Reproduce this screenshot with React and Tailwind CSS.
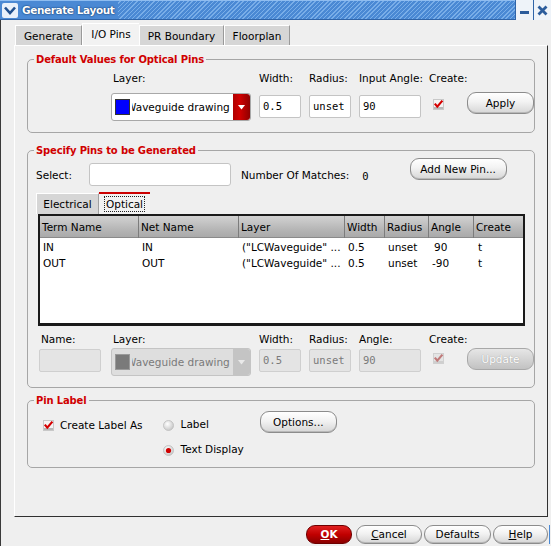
import React from "react";

function Check({ disabled }) {
  return (
    <svg width="11" height="11" viewBox="0 0 11 11" className="block">
      <rect x="0.5" y="0.5" width="10" height="10" fill={disabled ? "#e4e4e4" : "#f4f4f4"} stroke={disabled ? "#d0d0d0" : "#c8c8c8"} />
      <rect x="1" y="8" width="9" height="2" fill={disabled ? "#cfcfcf" : "#b8b8b8"} />
      <path d="M1.8 4.6 L4.3 7.6 L9.4 1.6" fill="none" stroke={disabled ? "#c07a7a" : "#d40000"} strokeWidth="2.2" />
    </svg>
  );
}

function Radio({ on }) {
  return (
    <svg width="11" height="11" viewBox="0 0 11 11" className="block">
      <defs>
        <radialGradient id={on ? "rg1" : "rg0"} cx="0.4" cy="0.35" r="0.7">
          <stop offset="0" stopColor="#ffffff" />
          <stop offset="1" stopColor="#c4c4c4" />
        </radialGradient>
      </defs>
      <circle cx="5.5" cy="5.5" r="5" fill={`url(#${on ? "rg1" : "rg0"})`} stroke="#bdbdbd" strokeWidth="0.8" />
      {on && <circle cx="5.5" cy="5.5" r="2.6" fill="#d00000" />}
    </svg>
  );
}

function Btn({ children, className }) {
  return (
    <div className={"flex items-center justify-center rounded-[9px] border border-[#8c8c8c] bg-[linear-gradient(#ffffff,#f2f2f2_45%,#d6d6d6)] text-black shadow-[inset_0_-1px_0_#b8b8b8] " + className}>
      {children}
    </div>
  );
}

function DisBtn({ children, className }) {
  return (
    <div className={"flex items-center justify-center rounded-[9px] border border-[#a8a8a8] bg-[linear-gradient(#e6e6e6,#d6d6d6_45%,#c2c2c2)] text-white [text-shadow:0_0_1px_#8a8a8a] " + className}>
      {children}
    </div>
  );
}

function Combo({ disabled }) {
  return (
    <div className={"flex h-[28px] w-[140px] items-stretch rounded-[3px] border " + (disabled ? "border-[#c4c4c4] bg-[#dedede]" : "border-[#a8a8a8] bg-white")}>
      <div className="flex items-center pl-[3px]">
        <div className={"h-[16px] w-[15px] border " + (disabled ? "border-[#9a9a9a] bg-[#7a7a7a]" : "border-[#333] bg-[#0000ff]")}></div>
      </div>
      <div className="ml-[2px] flex flex-1 items-center overflow-hidden">
        <span className={"-ml-[6px] whitespace-nowrap " + (disabled ? "text-[#7a7a7a]" : "text-black")}>Waveguide drawing</span>
      </div>
      <div className={"flex w-[17px] items-center justify-center rounded-r-[3px] " + (disabled ? "bg-[#c4c4c4]" : "bg-[linear-gradient(90deg,#b00000,#d00000_40%,#8e0000)]")}>
        <svg width="7" height="5" viewBox="0 0 7 5"><path d="M0 0 L7 0 L3.5 4.5 Z" fill={disabled ? "#eaeaea" : "#ffffff"} /></svg>
      </div>
    </div>
  );
}

function Entry({ w, value, disabled, mono = true }) {
  return (
    <div className={"flex h-[23px] items-center rounded-[2px] border pl-[3px] " + w + " " + (disabled ? "border-[#cfcfcf] bg-[#e4e4e4] text-[#7a7a7a]" : "border-[#c4c4c4] bg-white text-black") + (mono ? " font-['DejaVu_Sans_Mono',monospace]" : "")}>
      {value}
    </div>
  );
}

const cols = [
  ["Term Name", "w-[98px]"],
  ["Net Name", "w-[100px]"],
  ["Layer", "w-[106px]"],
  ["Width", "w-[40px]"],
  ["Radius", "w-[44px]"],
  ["Angle", "w-[45px]"],
  ["Create", "w-[50px]"],
];

const rows = [
  ["IN", "IN", '("LCWaveguide" ...', "0.5", "unset", "90", "t"],
  ["OUT", "OUT", '("LCWaveguide" ...', "0.5", "unset", "-90", "t"],
];

const dataPad = ["pl-[3px]", "pl-[4px]", "pl-[4px]", "pl-[4px]", "pl-[4px]", "pl-[6px]", "pl-[5px]"];
const dataPad2 = ["pl-[3px]", "pl-[4px]", "pl-[4px]", "pl-[4px]", "pl-[4px]", "pl-[4px]", "pl-[5px]"];

const legendCls = "ml-[6px] px-[2px] text-[10px] font-bold leading-[13px] tracking-[-0.15px] text-[#d00000]";

export default function App() {
  return (
    <div className="relative h-[546px] w-[551px] overflow-hidden bg-[#efefef] font-['DejaVu_Sans',sans-serif] text-[10.5px] leading-[13px] text-black">
      {/* Title bar */}
      <div className="flex h-[20px] items-stretch bg-[#4a89d4] shadow-[inset_0_1px_0_#8fbdf0,inset_0_-1px_0_#2f64a8]">
        <div className="flex w-[20px] items-center justify-center">
          <div className="flex h-[15px] w-[16px] items-center justify-center rounded-[2px] bg-[#e8f0fa]">
            <svg width="12" height="9" viewBox="0 0 12 9"><path d="M1 1.5 L6 7 L11 1.5" fill="none" stroke="#1f4f8e" strokeWidth="2.6" /></svg>
          </div>
        </div>
        <div className="flex items-center pl-[2px] pr-[4px] text-[10.5px] font-bold tracking-[-0.4px] text-white [text-shadow:0_0_2px_#12386b,0_0_1px_#12386b]">Generate Layout</div>
        <div className="flex-1 [background-image:repeating-linear-gradient(135deg,#4a89d4_0px,#4a89d4_2px,#79aee8_2px,#79aee8_3px)] shadow-[inset_0_1px_0_#8fbdf0,inset_0_-1px_0_#2f64a8]"></div>
        <div className="flex w-[18px] items-center justify-center border-l border-[#2f64a8] bg-[#eef3f9]">
          <div className="mt-[5px] h-[3px] w-[9px] bg-[#2b5c9c]"></div>
        </div>
        <div className="flex w-[18px] items-center justify-center border-l border-[#2f64a8] bg-[#eef3f9]">
          <svg width="11" height="11" viewBox="0 0 11 11"><path d="M1.5 1.5 L9.5 9.5 M9.5 1.5 L1.5 9.5" stroke="#2b5c9c" strokeWidth="2.8" /></svg>
        </div>
      </div>

      {/* Window body */}
      <div className="h-[526px] border-l border-[#3a3a3a]">
        {/* Main tabs */}
        <div className="ml-[14px] flex h-[25px] items-end pt-[3px]">
          <div className="flex h-[20px] w-[67px] items-center justify-center border border-b-0 border-l-[#ffffff] border-r-[#9a9a9a] border-t-[#ffffff] bg-[#d6d6d6] pt-[1px]">Generate</div>
          <div className="flex h-[22px] w-[57px] items-center justify-center border-l border-t border-[#ffffff] bg-[#f2f2f2]">I/O Pins</div>
          <div className="flex h-[20px] w-[85px] items-center justify-center border border-b-0 border-l-[#ffffff] border-r-[#9a9a9a] border-t-[#ffffff] bg-[#d6d6d6] pt-[1px]">PR Boundary</div>
          <div className="flex h-[20px] w-[66px] items-center justify-center border border-b-0 border-l-[#ffffff] border-r-[#9a9a9a] border-t-[#ffffff] bg-[#d6d6d6] pt-[1px]">Floorplan</div>
        </div>

        {/* Tab pane */}
        <div className="ml-[13px] h-[472px] w-[534px] border border-b-[#303030] border-l-[#ffffff] border-r-[#303030] border-t-[#ffffff] bg-[#efefef] pl-[12px] pt-[7px]">
          {/* Group 1 */}
          <fieldset className="h-[80px] w-[508px] rounded-[5px] border border-[#a6a6a6] p-0">
            <legend className={legendCls}>Default Values for Optical Pins</legend>
            <div className="flex items-start pt-[6px]">
              <div className="ml-[83px] flex w-[140px] flex-col">
                <div className="ml-[2px] h-[13px]">Layer:</div>
                <div className="mt-[8px]"><Combo /></div>
              </div>
              <div className="ml-[8px] flex w-[42px] flex-col">
                <div className="h-[13px]">Width:</div>
                <div className="mt-[10px]"><Entry w="w-[42px]" value="0.5" /></div>
              </div>
              <div className="ml-[8px] flex w-[42px] flex-col">
                <div className="h-[13px] whitespace-nowrap">Radius:</div>
                <div className="mt-[10px]"><Entry w="w-[42px]" value="unset" /></div>
              </div>
              <div className="ml-[8px] flex w-[62px] flex-col">
                <div className="h-[13px] whitespace-nowrap">Input Angle:</div>
                <div className="mt-[10px]"><Entry w="w-[62px]" value="90" /></div>
              </div>
              <div className="ml-[8px] flex w-[38px] flex-col">
                <div className="h-[13px]">Create:</div>
                <div className="ml-[4px] mt-[14px]"><Check /></div>
              </div>
              <div className="flex flex-col">
                <div className="h-[13px]"></div>
                <Btn className="mt-[7px] h-[22px] w-[67px]">Apply</Btn>
              </div>
            </div>
          </fieldset>

          {/* Group 2 */}
          <fieldset className="mt-[11px] h-[244px] w-[508px] rounded-[5px] border border-[#a6a6a6] p-0">
            <legend className={legendCls}>Specify Pins to be Generated</legend>
            <div className="flex h-[35px] items-start pt-[1px]">
              <div className="ml-[8px] mt-[11px]">Select:</div>
              <div className="ml-[17px] mt-[5px] h-[23px] w-[142px] rounded-[3px] border border-[#c4c4c4] bg-white"></div>
              <div className="ml-[10px] mt-[11px] whitespace-nowrap">Number Of Matches:</div>
              <div className="ml-[13px] mt-[12px] font-['DejaVu_Sans_Mono',monospace]">0</div>
              <Btn className="ml-[41px] h-[22px] w-[97px]">Add New Pin...</Btn>
            </div>
            {/* Sub tabs */}
            <div className="ml-[8px] flex h-[22px] items-end">
              <div className="flex h-[21px] w-[63px] items-center justify-center border border-b-0 border-l-[#ffffff] border-r-[#a0a0a0] border-t-[#ffffff] bg-[#d6d6d6] pt-[1px]">Electrical</div>
              <div className="flex h-[22px] w-[51px] items-center justify-center border-t-2 border-[#cc0000] bg-[#f2f2f2]">
                <span className="border border-dotted border-[#222] px-[1px] leading-[14px]">Optical</span>
              </div>
            </div>
            {/* Table */}
            <div className="ml-[10px] h-[112px] w-[487px] border-b-[3px] border-l-2 border-r-2 border-t-2 border-[#1a1a1a] bg-white">
              <div className="flex h-[22px] bg-[linear-gradient(#d2d2d2,#b6b6b6_60%,#a8a8a8)] shadow-[inset_0_-1px_0_#8a8a8a]">
                {cols.map(([name, w], i) => (
                  <div key={name} className={"flex items-center pl-[2px] " + w + (i > 0 ? " border-l border-[#7c7c7c]" : "")}>{name}</div>
                ))}
              </div>
              <div className="pt-[1px]">
                {rows.map((r, ri) => (
                  <div key={ri} className="flex h-[16.5px] items-center">
                    {r.map((c, i) => (
                      <div key={i} className={"whitespace-nowrap " + cols[i][1] + " " + (c === "-90" ? dataPad2[i] : dataPad[i])}>{c}</div>
                    ))}
                  </div>
                ))}
              </div>
            </div>
            {/* Edit row */}
            <div className="flex items-start pt-[7px]">
              <div className="ml-[11px] flex w-[62px] flex-col">
                <div className="ml-[2px] h-[13px]">Name:</div>
                <div className="mt-[3px] h-[23px] w-[62px] rounded-[2px] border border-[#cfcfcf] bg-[#e4e4e4]"></div>
              </div>
              <div className="ml-[10px] flex w-[140px] flex-col">
                <div className="ml-[2px] h-[13px]">Layer:</div>
                <div className="mt-[2px]"><Combo disabled /></div>
              </div>
              <div className="ml-[8px] flex w-[42px] flex-col">
                <div className="h-[13px]">Width:</div>
                <div className="mt-[3px]"><Entry w="w-[42px]" value="0.5" disabled /></div>
              </div>
              <div className="ml-[8px] flex w-[42px] flex-col">
                <div className="h-[13px] whitespace-nowrap">Radius:</div>
                <div className="mt-[3px]"><Entry w="w-[42px]" value="unset" disabled /></div>
              </div>
              <div className="ml-[8px] flex w-[62px] flex-col">
                <div className="h-[13px]">Angle:</div>
                <div className="mt-[3px]"><Entry w="w-[62px]" value="90" disabled /></div>
              </div>
              <div className="ml-[8px] flex w-[38px] flex-col">
                <div className="h-[13px]">Create:</div>
                <div className="ml-[4px] mt-[7px]"><Check disabled /></div>
              </div>
              <div className="flex flex-col">
                <div className="h-[13px]"></div>
                <DisBtn className="mt-[2px] h-[22px] w-[67px]">Update</DisBtn>
              </div>
            </div>
          </fieldset>

          {/* Group 3 */}
          <fieldset className="mt-[6px] h-[74px] w-[508px] rounded-[5px] border border-[#a6a6a6] p-0">
            <legend className={legendCls}>Pin Label</legend>
            <div className="flex items-start pt-[5px]">
              <div className="ml-[15px] mt-[8px]"><Check /></div>
              <div className="ml-[6px] mt-[7px]">Create Label As</div>
              <div className="ml-[20px] mt-[2px] flex flex-col gap-[12px]">
                <div className="flex h-[13px] items-center gap-[7px] pt-[9px]"><Radio /><span className="-mt-[1px]">Label</span></div>
                <div className="flex h-[13px] items-center gap-[7px] pt-[9px]"><Radio on /><span className="-mt-[1px]">Text Display</span></div>
              </div>
              <Btn className="ml-[16px] -mt-[1px] h-[22px] w-[77px]">Options...</Btn>
            </div>
          </fieldset>
        </div>

        {/* Bottom buttons */}
        <div className="mt-[8px] flex h-[19px] items-start">
          <div className="ml-[305px] flex h-[19px] w-[46px] items-center justify-center rounded-[9px] border border-[#6e0000] bg-[linear-gradient(#e02020,#c00000_50%,#8a0000)] font-bold text-white"><span className="underline">O</span>K</div>
          <Btn className="ml-[4px] h-[19px] w-[66px]"><span className="underline">C</span>ancel</Btn>
          <Btn className="ml-[2px] h-[19px] w-[67px]">Defaults</Btn>
          <Btn className="ml-[2px] h-[19px] w-[55px]"><span className="underline">H</span>elp</Btn>
          <div className="ml-[1px] h-[19px] w-[1px] bg-[#4a89d4]"></div>
        </div>
      </div>
    </div>
  );
}
